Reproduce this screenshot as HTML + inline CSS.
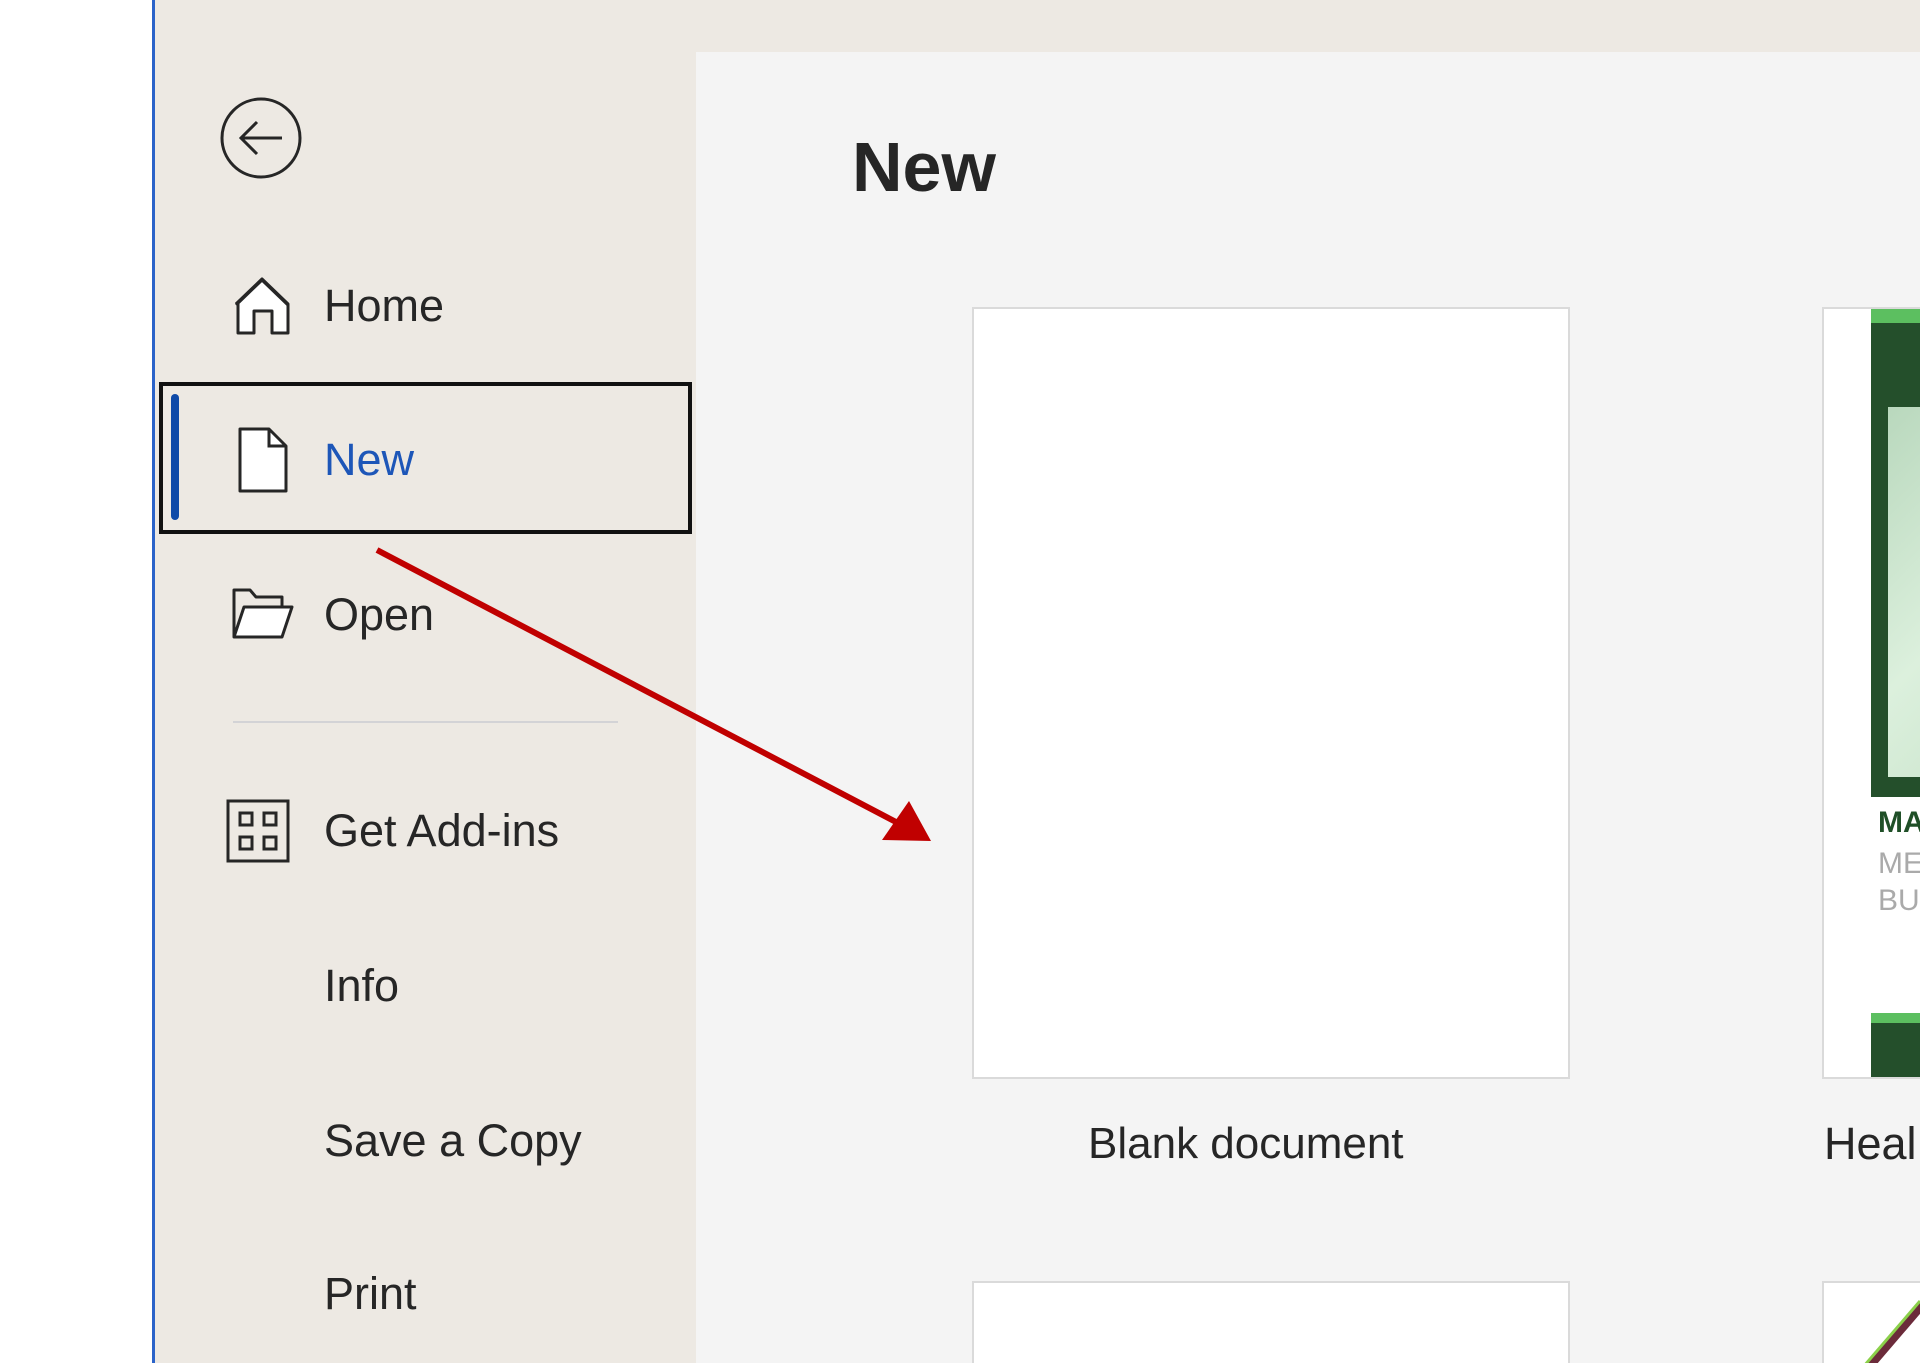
<!DOCTYPE html>
<html><head><meta charset="utf-8"><style>
*{margin:0;padding:0;box-sizing:border-box}
html,body{width:1920px;height:1363px;overflow:hidden}
body{background:#fff;position:relative;font-family:"Liberation Sans",sans-serif;color:#262626}
.abs{position:absolute}
.side{left:155px;top:0;width:541px;height:1363px;background:#ede9e3}
.blue{left:152px;top:0;width:3px;height:1363px;background:#2b63c9}
.main{left:696px;top:52px;width:1224px;height:1311px;background:#f4f4f4}
.top{left:696px;top:0;width:1224px;height:52px;background:#ede9e3}
.item{position:absolute;left:324px;font-size:45px;line-height:56px;color:#262626}
.card{position:absolute;background:#fff;border:2px solid #dadada}
</style></head><body>
<div class="abs side"></div>
<div class="abs blue"></div>
<div class="abs top"></div>
<div class="abs main"></div>

<svg class="abs" style="left:218px;top:95px" width="86" height="86" viewBox="0 0 86 86">
<circle cx="43" cy="43" r="39" fill="none" stroke="#262626" stroke-width="3"/>
<path d="M64 43H24M39 27L23 43L39 59" fill="none" stroke="#262626" stroke-width="3"/>
</svg>

<svg class="abs" style="left:232px;top:273px" width="62" height="62" viewBox="0 0 62 62">
<path d="M4 31L30 6L56 31V60H40V38H22V60H6V31" fill="#fff" stroke="#262626" stroke-width="3" stroke-linejoin="round"/>
<path d="M4 32L30 7L56 32" fill="none" stroke="#262626" stroke-width="3"/>
</svg>
<div class="item" style="top:278px">Home</div>

<div class="abs" style="left:159px;top:382px;width:533px;height:152px;border:4px solid #111"></div>
<div class="abs" style="left:171px;top:394px;width:8px;height:126px;background:#0f4aa8;border-radius:4px"></div>
<svg class="abs" style="left:236px;top:426px" width="54" height="68" viewBox="0 0 54 68">
<path d="M4 3H33L50 20V65H4Z" fill="#fff" stroke="#262626" stroke-width="3" stroke-linejoin="round"/>
<path d="M33 3V20H50" fill="none" stroke="#262626" stroke-width="3"/>
</svg>
<div class="item" style="top:432px;color:#1d56b8">New</div>

<svg class="abs" style="left:230px;top:585px" width="66" height="56" viewBox="0 0 66 56">
<path d="M4 52V5H20L26 12H52V22" fill="none" stroke="#262626" stroke-width="3" stroke-linejoin="round"/>
<path d="M4 52L14 22H62L52 52Z" fill="#fff" stroke="#262626" stroke-width="3" stroke-linejoin="round"/>
</svg>
<div class="item" style="top:587px">Open</div>

<div class="abs" style="left:233px;top:721px;width:385px;height:2px;background:#d3d3d6"></div>

<svg class="abs" style="left:226px;top:799px" width="64" height="64" viewBox="0 0 64 64">
<rect x="2" y="2" width="60" height="60" fill="none" stroke="#262626" stroke-width="3"/>
<rect x="14" y="14" width="12" height="12" fill="none" stroke="#262626" stroke-width="3"/>
<rect x="38" y="14" width="12" height="12" fill="none" stroke="#262626" stroke-width="3"/>
<rect x="14" y="38" width="12" height="12" fill="none" stroke="#262626" stroke-width="3"/>
<rect x="38" y="38" width="12" height="12" fill="none" stroke="#262626" stroke-width="3"/>
</svg>
<div class="item" style="top:803px">Get Add-ins</div>
<div class="item" style="top:958px">Info</div>
<div class="item" style="top:1113px">Save a Copy</div>
<div class="item" style="top:1266px">Print</div>

<div class="abs" style="left:852px;top:125px;font-size:70px;font-weight:bold;line-height:84px;color:#262626">New</div>

<div class="card" style="left:972px;top:307px;width:598px;height:772px"></div>
<div class="abs" style="left:1088px;top:1116px;font-size:44px;line-height:56px;white-space:nowrap">Blank document</div>

<div class="card" style="left:1822px;top:307px;width:200px;height:772px;overflow:hidden">
  <div class="abs" style="left:47px;top:0;width:200px;height:488px;background:#244f2b;border-top:14px solid #5cbf60"></div>
  <div class="abs" style="left:64px;top:98px;width:200px;height:370px;background:linear-gradient(135deg,#b9d8bd,#dcf0dd 50%,#c4e0c6)"></div>
  <div class="abs" style="left:54px;top:496px;font-size:30px;font-weight:bold;color:#1f4f27;line-height:36px">MA</div>
  <div class="abs" style="left:54px;top:537px;font-size:30px;color:#aaa;line-height:36px">ME</div>
  <div class="abs" style="left:54px;top:574px;font-size:30px;color:#aaa;line-height:36px">BU</div>
  <div class="abs" style="left:47px;top:704px;width:200px;height:70px;background:#244f2b;border-top:10px solid #5cbf60"></div>
</div>
<div class="abs" style="left:1824px;top:1116px;font-size:45px;line-height:56px;white-space:nowrap">Heal</div>

<div class="card" style="left:972px;top:1281px;width:598px;height:82px;border-bottom:none"></div>
<div class="card" style="left:1822px;top:1281px;width:98px;height:82px;overflow:hidden;border-bottom:none;border-right:none">
<svg class="abs" style="left:0;top:0" width="100" height="90"><path d="M40 90L100 20" stroke="#6b2b3a" stroke-width="8"/><path d="M34 90L96 18" stroke="#8bd04a" stroke-width="3"/></svg>
</div>

<svg class="abs" style="left:0;top:0" width="1920" height="1363">
<line x1="377" y1="550" x2="896" y2="822" stroke="#c00000" stroke-width="6"/>
<polygon points="931,841 882,840 909,801" fill="#c00000"/>
</svg>
</body></html>
